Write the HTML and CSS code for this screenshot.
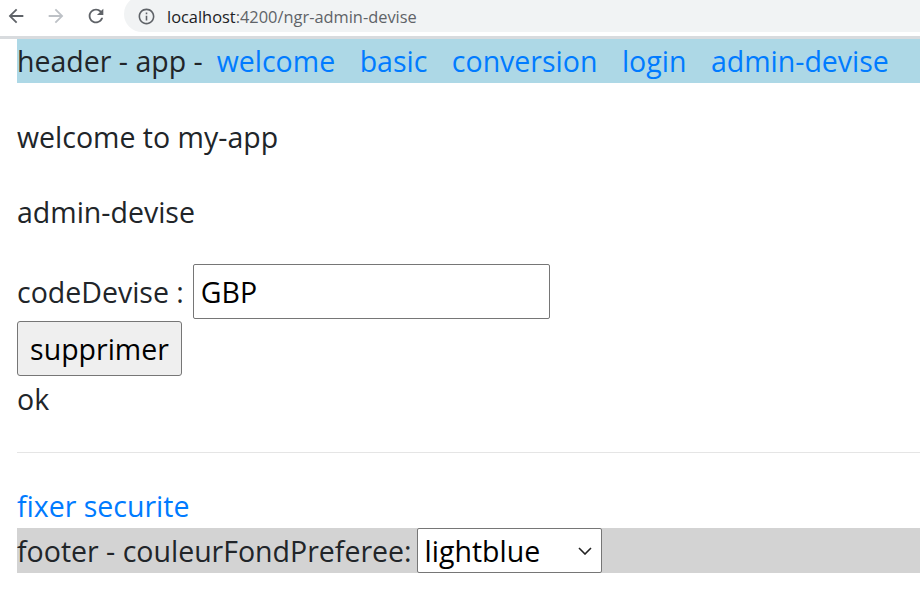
FILE: index.html
```html
<!DOCTYPE html>
<html lang="fr">
<head>
<meta charset="utf-8">
<title>ngr-admin-devise</title>
<link rel="stylesheet" href="styles.css">
</head>
<body>
<div class="chrome">
  <div class="nav-icons">
    <svg class="ic" viewBox="0 0 24 24" width="22" height="22"><path fill="#5f6368" d="M20 11H7.83l5.59-5.59L12 4l-8 8 8 8 1.41-1.41L7.83 13H20v-2z"/></svg>
    <svg class="ic" viewBox="0 0 24 24" width="22" height="22"><path fill="#bdc1c6" d="M4 11h12.17l-5.59-5.59L12 4l8 8-8 8-1.41-1.41L16.17 13H4v-2z"/></svg>
    <svg class="ic" viewBox="0 0 24 24" width="22" height="22"><path fill="#5f6368" d="M17.65 6.35C16.2 4.9 14.21 4 12 4c-4.42 0-7.99 3.58-7.99 8s3.57 8 7.99 8c3.73 0 6.84-2.55 7.73-6h-2.08c-.82 2.33-3.04 4-5.65 4-3.31 0-6-2.69-6-6s2.69-6 6-6c1.66 0 3.14.69 4.22 1.78L13 11h7V4l-2.35 2.35z"/></svg>
  </div>
  <div class="omnibox">
    <svg class="info" viewBox="0 0 24 24" width="19" height="19"><path fill="#5f6368" d="M11 7h2v2h-2zm0 4h2v6h-2zm1-9C6.48 2 2 6.48 2 12s4.48 10 10 10 10-4.48 10-10S17.52 2 12 2zm0 18c-4.41 0-8-3.59-8-8s3.59-8 8-8 8 3.59 8 8-3.59 8-8 8z"/></svg>
    <span class="url"><span class="host">localhost</span>:4200/ngr-admin-devise</span>
  </div>
</div>
<div class="chrome-sep"></div>

<div class="app">
  <header class="app-header">
    <span class="app-title">header - app -</span>
    <nav class="links">
      <a href="#">welcome</a>
      <a href="#">basic</a>
      <a href="#">conversion</a>
      <a href="#">login</a>
      <a href="#">admin-devise</a>
    </nav>
  </header>

  <p class="line welcome">welcome to my-app</p>
  <p class="line section-title">admin-devise</p>

  <div class="field-row">
    <label class="line" for="code">codeDevise :</label>
    <input id="code" class="code-input" type="text" value="GBP">
  </div>
  <button class="btn">supprimer</button>
  <div class="line message">ok</div>

  <hr class="sep">

  <a class="line secure-link" href="#">fixer securite</a>

  <footer class="app-footer">
    <span class="line">footer - couleurFondPreferee:</span>
    <span class="select-wrap">
      <select class="color-select">
        <option>lightblue</option>
        <option>lightgreen</option>
        <option>white</option>
      </select>
      <svg class="chevron" viewBox="0 0 14 8" width="14" height="8"><path d="M1 1l6 6 6-6" fill="none" stroke="#222" stroke-width="1.6"/></svg>
    </span>
  </footer>
</div>
</body>
</html>
```
FILE: styles.css
```css
* { box-sizing: border-box; }

html, body {
  margin: 0;
  padding: 0;
  background: #fff;
}

body {
  font-family: "Open Sans", "Noto Sans", sans-serif;
  font-size: 28.5px;
  color: #212529;
  overflow: hidden;
}

/* browser chrome */
.chrome {
  height: 32px;
  display: flex;
  align-items: center;
  background: #fff;
}

.nav-icons {
  display: flex;
  align-items: center;
  gap: 18px;
  padding-left: 5px;
}

.ic { display: block; }

.omnibox {
  flex: 1;
  align-self: flex-end;
  height: 36px;
  margin-left: 17px;
  background: #f1f3f4;
  border-radius: 18px 0 0 18px;
  display: flex;
  align-items: center;
  padding: 4px 0 0 13px;
  margin-top: -4px;
}

.info { display: block; }

.url {
  margin-left: 11px;
  font-size: 16.4px;
  color: #5f6368;
}

.host { color: #202124; }

.chrome-sep {
  height: 7px;
  border-top: 4px solid #fff;
  background: #d8dbde;
}

/* app */
.app {
  margin-left: 17px;
}

.line {
  line-height: 42px;
}

.app-header {
  height: 44px;
  line-height: 44px;
  background: #add8e6;
  display: flex;
  align-items: center;
}

.links {
  display: flex;
  gap: 24.5px;
  margin-left: 14px;
}

a {
  color: #007bff;
  text-decoration: none;
}

.welcome,
.section-title {
  margin: 33px 0 0;
}

.field-row {
  margin-top: 31px;
  height: 55px;
  display: flex;
  align-items: center;
  gap: 9px;
}

.code-input {
  width: 357px;
  height: 55px;
  border: 1px solid #767676;
  border-radius: 2px;
  padding: 0 7px;
  font-family: inherit;
  font-size: 28.5px;
  color: #000;
  background: #fff;
}

.btn {
  display: block;
  margin-top: 2px;
  width: 165px;
  height: 55px;
  padding: 0;
  border: 1px solid #767676;
  border-radius: 3px;
  background: #efefef;
  font-family: inherit;
  font-size: 28.5px;
  color: #000;
}

.message { margin-top: 2px; }

.sep {
  margin: 32px 0 0;
  border: 0;
  border-top: 1px solid rgba(0, 0, 0, 0.1);
  height: 0;
}

.secure-link {
  display: block;
  margin-top: 32px;
  width: max-content;
}

.app-footer {
  margin-top: 1px;
  height: 45px;
  background: #d3d3d3;
  display: flex;
  align-items: center;
  gap: 5px;
}

.select-wrap {
  position: relative;
  display: block;
  height: 45px;
}

.color-select {
  -webkit-appearance: none;
  appearance: none;
  width: 185px;
  height: 45px;
  border: 1px solid #767676;
  border-radius: 2px;
  background: #fff;
  padding: 0 0 0 7px;
  font-family: inherit;
  font-size: 28.5px;
  color: #000;
}

.chevron {
  position: absolute;
  left: 161px;
  top: 19px;
  pointer-events: none;
}
```
